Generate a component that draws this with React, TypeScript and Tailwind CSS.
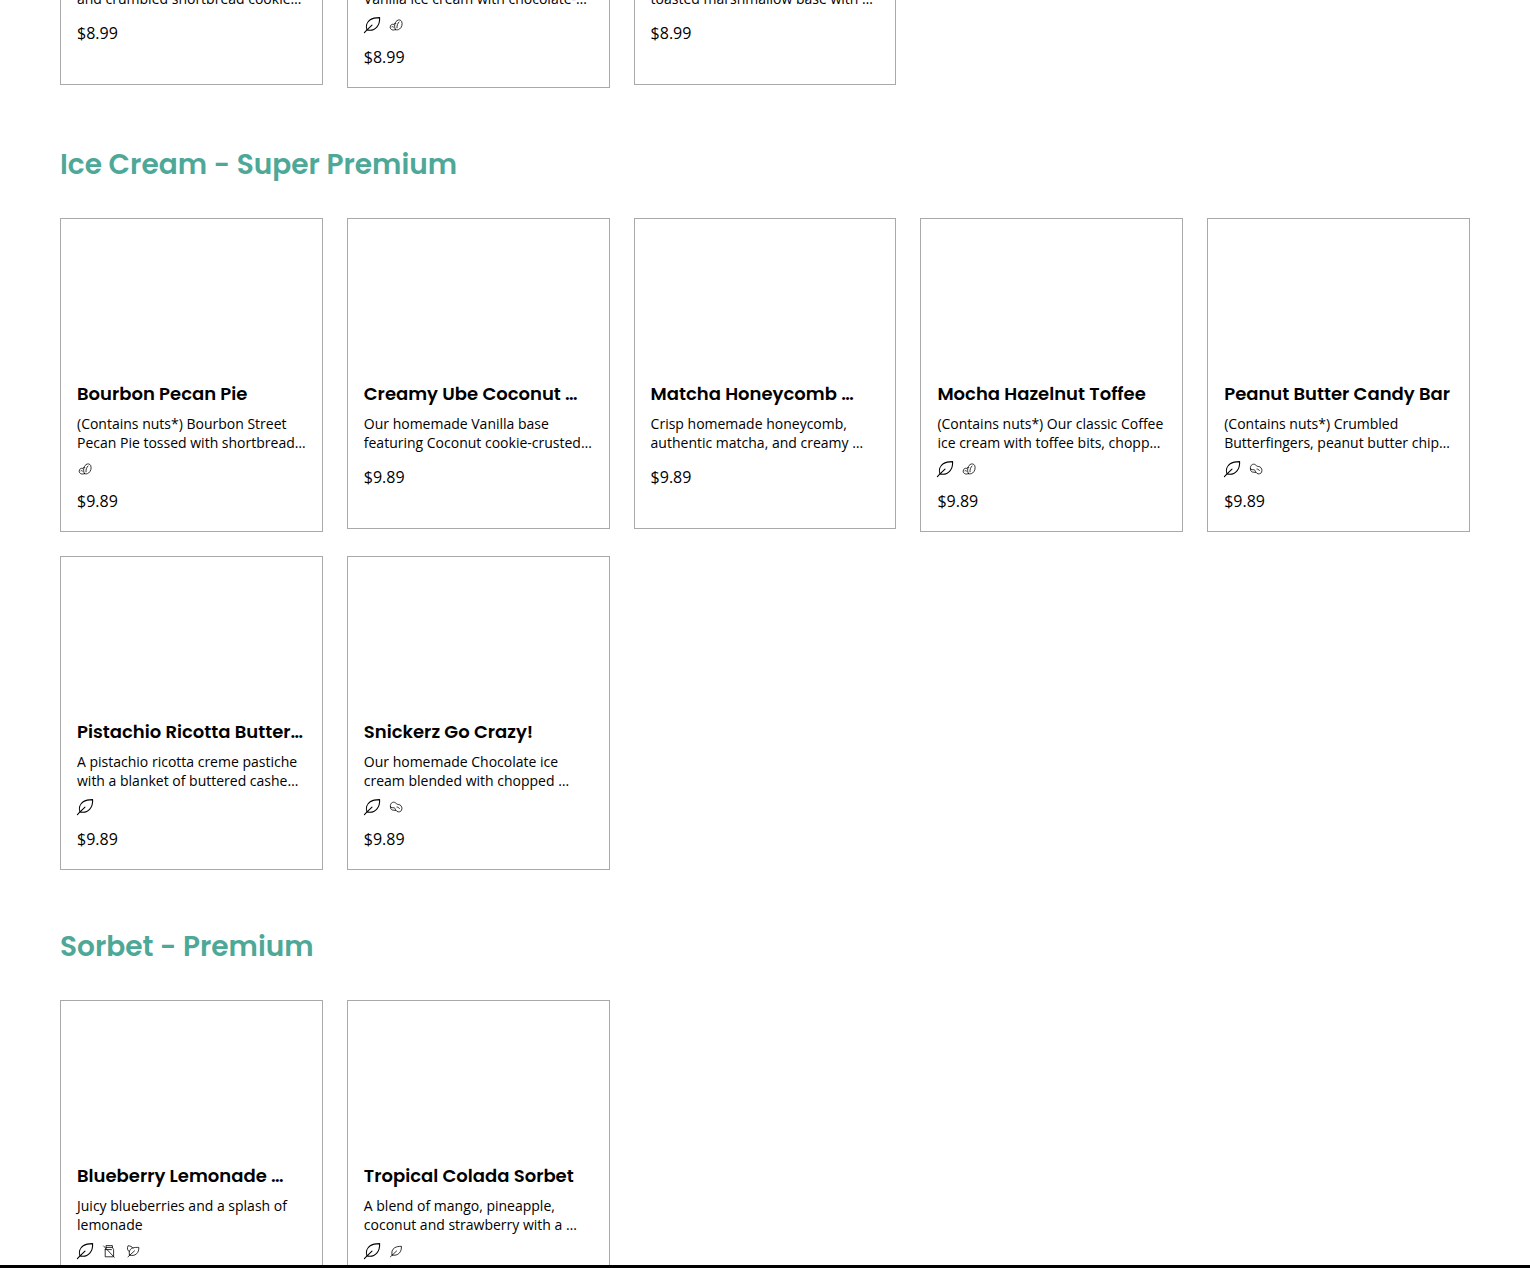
import type { ReactNode } from 'react';

type Tag = 'vegetarian' | 'nuts' | 'peanuts' | 'dairyFree' | 'vegan' | 'glutenFree';

type Item = {
  name?: string;
  lines: string[];
  price: string;
  tags?: Tag[];
};

const classics: Item[] = [
  { lines: ['and crumbled shortbread cookie…'], price: '$8.99' },
  { lines: ['Vanilla ice cream with chocolate-…'], price: '$8.99', tags: ['vegetarian', 'nuts'] },
  { lines: ['toasted marshmallow base with …'], price: '$8.99' },
];

const superPremium: Item[] = [
  {
    name: 'Bourbon Pecan Pie',
    lines: ['(Contains nuts*) Bourbon Street', 'Pecan Pie tossed with shortbread…'],
    price: '$9.89',
    tags: ['nuts'],
  },
  {
    name: 'Creamy Ube Coconut …',
    lines: ['Our homemade Vanilla base', 'featuring Coconut cookie-crusted…'],
    price: '$9.89',
  },
  {
    name: 'Matcha Honeycomb …',
    lines: ['Crisp homemade honeycomb,', 'authentic matcha, and creamy …'],
    price: '$9.89',
  },
  {
    name: 'Mocha Hazelnut Toffee',
    lines: ['(Contains nuts*) Our classic Coffee', 'ice cream with toffee bits, chopp…'],
    price: '$9.89',
    tags: ['vegetarian', 'nuts'],
  },
  {
    name: 'Peanut Butter Candy Bar',
    lines: ['(Contains nuts*) Crumbled', 'Butterfingers, peanut butter chip…'],
    price: '$9.89',
    tags: ['vegetarian', 'peanuts'],
  },
  {
    name: 'Pistachio Ricotta Butter…',
    lines: ['A pistachio ricotta creme pastiche', 'with a blanket of buttered cashe…'],
    price: '$9.89',
    tags: ['vegetarian'],
  },
  {
    name: 'Snickerz Go Crazy!',
    lines: ['Our homemade Chocolate ice', 'cream blended with chopped …'],
    price: '$9.89',
    tags: ['vegetarian', 'peanuts'],
  },
];

const sorbets: Item[] = [
  {
    name: 'Blueberry Lemonade …',
    lines: ['Juicy blueberries and a splash of', 'lemonade'],
    price: '$8.99',
    tags: ['vegetarian', 'dairyFree', 'vegan'],
  },
  {
    name: 'Tropical Colada Sorbet',
    lines: ['A blend of mango, pineapple,', 'coconut and strawberry with a …'],
    price: '$8.99',
    tags: ['vegetarian', 'glutenFree'],
  },
];

// 16x16 line drawings, one per dietary tag
const drawings: Record<Tag, ReactNode> = {
  vegetarian: (
    <>
      <path d="M3 12.9C1.6 9.4 2.6 5.2 6.2 2.8 9 .9 12.4.6 15.6.6c.2 3-.2 6.4-2.6 9.2-2.6 3.1-6.6 4-10 3.1Z" />
      <path d="M.4 15.6 3 12.9l5-4.700" />
    </>
  ),
  nuts: (
    <g strokeWidth="0.8">
      <path d="M7.2 12.6c-1.800 1.200-5 .2-5-2.400 0-2.200 1.800-3.400 3.600-2.800.4-.8 1.200-1.200 2-1" />
      <path d="M7.4 12.6C6 10 6.4 5.600 9 3.600c1.600-1.200 3.800-.8 4.600.8 1.200 2.400.2 6-2 7.600-1.200.9-3 1.200-4.200.6Z" />
      <path d="M9 10.8c-.2-2.400.6-4.400 2-5.800M4 9.800c.8-.4 1.400-.2 1.800.4" />
    </g>
  ),
  peanuts: (
    <g strokeWidth="0.8">
      <path d="M2.6 8C1.600 6.200 3.200 3.400 5.400 3.200c2-.2 2.400 1.400 3.800 2 1.400.4 2.600.2 3.800 1.600 1.400 1.600 1.200 4.200-.2 5.400-1.600 1.200-3.800.8-4.800-.8-.8-1.200-.6-2-1.800-2.600C5 8.400 3.400 9.200 2.600 8Z" />
      <path d="M2.600 8c-.4 1.400.4 2.400 1.600 3l3.800.4M9 8c1.200 0 2 .6 2.400 1.600" />
    </g>
  ),
  dairyFree: (
    <g strokeWidth="0.8">
      <path d="M5.400 2.600h6v1.800h-6ZM5.400 4.400 4.200 6.600v7.200h8.400V6.600l-1.200-2.200M4.200 6.600h6.200" />
      <path d="m2.600 3 10.600 11.200" />
    </g>
  ),
  vegan: (
    <g strokeWidth="0.8">
      <path d="M4.600 12C3.400 9 4.800 6 7.600 5c2-.7 4.200-.6 6.200-.6.1 2.400-.4 4.800-2.200 6.400-2 1.800-4.700 2.200-7 1.200Z" />
      <path d="M3 13.800 9.600 7.800M4.400 8.800C2.200 7.600 2 5 3 2.800c2.200 0 4 .8 4.800 2.200" />
    </g>
  ),
  glutenFree: (
    <g strokeWidth="0.8">
      <path d="M4.200 12C3.200 9.400 4 6.400 6.600 4.800c2-1.200 4.400-1.500 6.800-1.500.1 2.300-.2 4.700-2 6.700-1.900 2.100-4.600 2.700-7.200 2Z" />
      <path d="M2.400 13.800 8.600 8" />
    </g>
  ),
};

const TagIcon = ({ tag }: { tag: Tag }) => (
  <svg
    viewBox="0 0 16 16"
    className="h-4 w-4 overflow-visible"
    fill="none"
    stroke="black"
    strokeWidth="1.1"
    strokeLinecap="round"
    strokeLinejoin="round"
    aria-hidden
  >
    {drawings[tag]}
  </svg>
);

const CardDetails = ({ item }: { item: Item }) => (
  <>
    <p className="pb-px text-sm leading-[19px] whitespace-nowrap">
      {item.lines.map((line) => (
        <span key={line} className="block">
          {line}
        </span>
      ))}
    </p>
    {item.tags && (
      <div className="mt-2 flex gap-2">
        {item.tags.map((tag) => (
          <TagIcon key={tag} tag={tag} />
        ))}
      </div>
    )}
    <p className="mt-3 text-base leading-6">{item.price}</p>
  </>
);

const MenuCard = ({ item }: { item: Item }) => (
  <article className="min-h-[311px] border border-[#a9a9a9] px-4 pb-[18px]">
    {/* photo slot */}
    <div className="h-[163px]" />
    <h3 className="mb-2 font-[Poppins,Inter,sans-serif] text-lg leading-6 font-semibold whitespace-nowrap">
      {item.name}
    </h3>
    <CardDetails item={item} />
  </article>
);

const MenuSection = ({ title, items }: { title: string; items: Item[] }) => (
  <section>
    <h2 className="pt-14 pb-8 font-[Poppins,Inter,sans-serif] text-[28px] leading-[42px] font-semibold text-[#4da898]">
      {title}
    </h2>
    <div className="grid grid-cols-5 items-start gap-6">
      {items.map((item) => (
        <MenuCard key={item.name} item={item} />
      ))}
    </div>
  </section>
);

export default function App() {
  return (
    <div className="h-screen overflow-hidden border-b-[3px] border-black bg-white font-['Open_Sans','Noto_Sans',sans-serif] text-black">
      <main className="px-15">
        {/* tail end of the previous section */}
        <div className="-mt-[11px] grid grid-cols-5 items-start gap-6">
          {classics.map((item) => (
            <article key={item.lines[0]} className="min-h-[96px] border border-t-0 border-[#a9a9a9] px-4 pb-[18px]">
              <CardDetails item={item} />
            </article>
          ))}
        </div>
        <MenuSection title="Ice Cream - Super Premium" items={superPremium} />
        <MenuSection title="Sorbet - Premium" items={sorbets} />
      </main>
    </div>
  );
}
